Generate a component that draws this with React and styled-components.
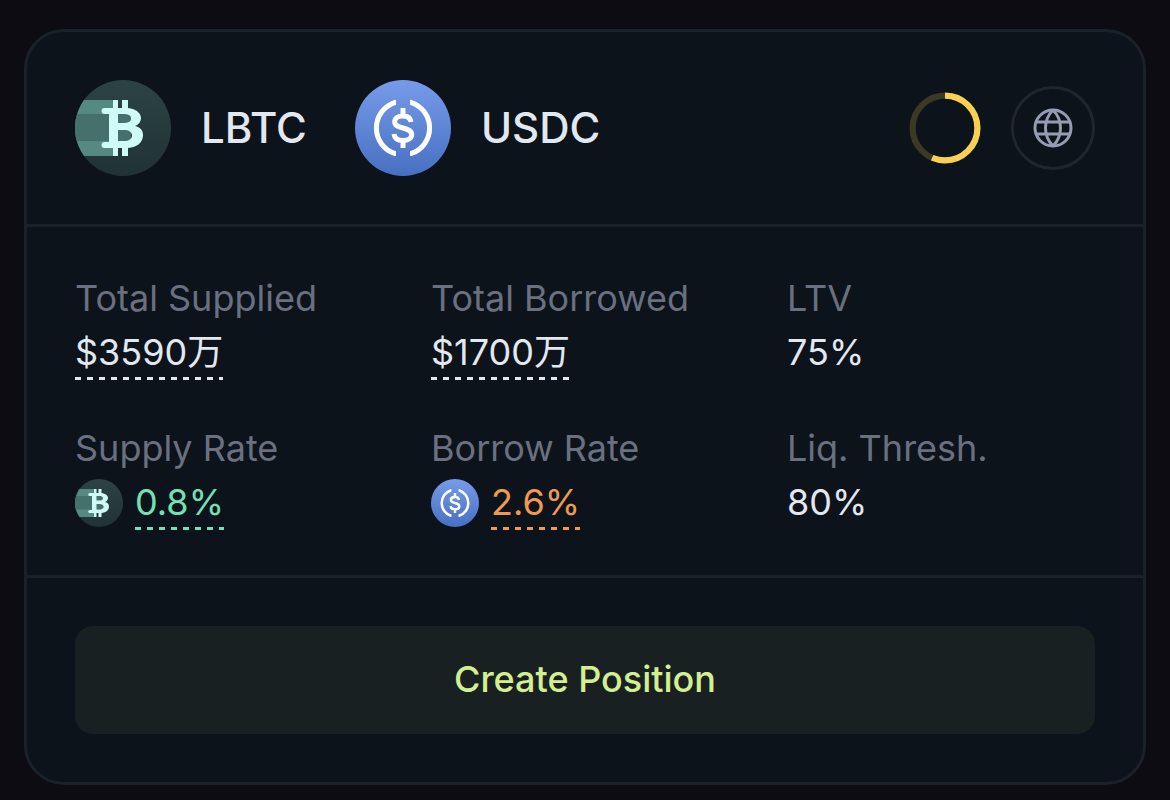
import React from "react";
import styled, { createGlobalStyle } from "styled-components";

const Global = createGlobalStyle`
  *, *::before, *::after { box-sizing: border-box; }
  body {
    margin: 0;
    background: #0c0c12;
    color: #e2e8f0;
    font-family: Inter, "Noto Sans CJK SC", sans-serif;
  }
`;

const Page = styled.main`
  padding: 29px 24px 15px;
`;

const Card = styled.article`
  background: #0c131a;
  border: 3px solid #1b2129;
  border-radius: 40px;
  overflow: hidden;
`;

const Header = styled.header`
  display: flex;
  align-items: center;
  justify-content: space-between;
  padding: 48px;
  border-bottom: 3px solid #1b2129;
`;

const Group = styled.div`
  display: flex;
  align-items: center;
  gap: ${(p) => p.$gap}px;
`;

const Symbol = styled.h2`
  margin: 0;
  font-size: 42px;
  line-height: 48px;
  font-weight: 500;
  color: #e2e8f0;
`;

const Icon = styled.svg`
  display: block;
  flex: none;
  width: ${(p) => p.$size}px;
  height: ${(p) => p.$size}px;
`;

const RoundButton = styled.button`
  display: grid;
  place-items: center;
  width: 84px;
  height: 84px;
  padding: 0;
  border: 3px solid #20252e;
  border-radius: 50%;
  background: none;
  color: #949db2;
  cursor: pointer;
`;

const Stats = styled.dl`
  display: grid;
  grid-template-columns: repeat(3, 1fr);
  gap: 45px 48px;
  margin: 0;
  padding: 48px 48px 45px;
`;

const Stat = styled.div`
  display: flex;
  flex-direction: column;
  gap: 8px;
`;

const Label = styled.dt`
  font-size: 36px;
  line-height: 46px;
  color: #6a7080;
`;

const Value = styled.dd`
  display: flex;
  align-items: flex-start;
  gap: 12px;
  margin: 0;
  font-size: 36px;
  line-height: 46px;
`;

const Figure = styled.span`
  padding-bottom: 5px;
  color: ${(p) => p.$color || "#e2e8f0"};
  background: ${(p) =>
    p.$plain
      ? "none"
      : "repeating-linear-gradient(90deg, currentColor 0 6px, transparent 6px 12px) left bottom / 100% 3px no-repeat"};
`;

const Footer = styled.footer`
  padding: 48px;
  border-top: 3px solid #1b2129;
`;

const Action = styled.button`
  display: block;
  width: 100%;
  padding: 30px 30px 32px;
  border: 0;
  border-radius: 18px;
  background: #182022;
  color: #d3ef8f;
  font: 500 36px/46px Inter, sans-serif;
  cursor: pointer;
`;

function Lbtc({ size, id }) {
  return (
    <Icon $size={size} viewBox="0 0 96 96" aria-hidden="true">
      <defs>
        <clipPath id={id}><circle cx="48" cy="48" r="48" /></clipPath>
        <linearGradient id={id + "g"} x1="0" y1="0" x2="0" y2="1">
          <stop offset="0" stopColor="#2c4344" />
          <stop offset="1" stopColor="#203234" />
        </linearGradient>
      </defs>
      <g clipPath={`url(#${id})`}>
        <rect width="96" height="96" fill={`url(#${id}g)`} />
        <path d="M0 20h40v56H0z" fill="#568981" />
        <path d="M0 34h56v27H0z" fill="#45706b" />
      </g>
      <path
        fill="#cffdf5"
        fillRule="evenodd"
        d="M38 20h5v8h4v-8h6v8c8 1 13 5 13 10 0 4-3 7-6 8 5 1 8 4 8 9 0 8-6 12-15 13v8h-6v-8h-4v8h-5v-8H29.500a2 2 0 0 1 0-6H34V34h-4.500a2 2 0 0 1 0-6H38zM43 34v9h5c5 0 8-1 8-4.500S53 34 48 34zM43 50v11h6c5 0 8-2 8-5.500S54 50 49 50z"
      />
    </Icon>
  );
}

function Usdc({ size, id }) {
  return (
    <Icon $size={size} viewBox="0 0 96 96" aria-hidden="true">
      <defs>
        <linearGradient id={id} x1="0" y1="0" x2="0" y2="1">
          <stop offset="0" stopColor="#769be9" />
          <stop offset="1" stopColor="#486fc1" />
        </linearGradient>
      </defs>
      <circle cx="48" cy="48" r="48" fill={`url(#${id})`} />
      <path
        fill="#fff"
        d="M41 21c0-1-.8-1.400-1.600-1.100A29.500 29.500 0 0 0 39.400 76.100c.8.300 1.600-.1 1.600-1.100v-3.800A24.300 24.300 0 0 1 41 24.800zM55 21c0-1 .8-1.400 1.600-1.100A29.500 29.500 0 0 1 56.600 76.100c-.8.300-1.600-.1-1.600-1.100v-3.800A24.300 24.300 0 0 0 55 24.800z"
      />
      <g fill="none" stroke="#fff" strokeWidth="5">
        <path d="M48 28v8M48 60v8" />
        <path d="M56 42c-.5-4-3.500-6-8-6-5 0-8.300 2.300-8.300 5.800 0 8.200 17 4.200 17 12.700 0 3.800-3.700 6-8.700 6s-8.500-2.200-9-6.500" />
      </g>
    </Icon>
  );
}

export default function App() {
  return (
    <Page>
      <Global />
      <Card>
        <Header>
          <Group $gap={48}>
            <Group $gap={30}>
              <Lbtc size={96} id="lbtc-large" />
              <Symbol>LBTC</Symbol>
            </Group>
            <Group $gap={30}>
              <Usdc size={96} id="usdc-large" />
              <Symbol>USDC</Symbol>
            </Group>
          </Group>
          <Group $gap={30}>
            <Icon $size={72} viewBox="0 0 72 72" role="img" aria-label="Utilization">
              <g fill="none" strokeWidth="6.200" stroke="#f8d150" transform="rotate(-90 36 36)">
                <circle cx="36" cy="36" r="32.400" opacity=".2" />
                <circle cx="36" cy="36" r="32.400" pathLength="100" strokeDasharray="56.500 43.500" />
              </g>
            </Icon>
            <RoundButton type="button" aria-label="Network">
              <Icon $size={40} viewBox="0 0 40 40" aria-hidden="true">
                <g fill="none" stroke="currentColor" strokeWidth="3">
                  <circle cx="20" cy="20" r="18" />
                  <path d="M3 14h34M3 26h34M20 2c-10 10-10 26 0 36M20 2c10 10 10 26 0 36" />
                </g>
              </Icon>
            </RoundButton>
          </Group>
        </Header>
        <Stats>
          <Stat>
            <Label>Total Supplied</Label>
            <Value><Figure>$3590万</Figure></Value>
          </Stat>
          <Stat>
            <Label>Total Borrowed</Label>
            <Value><Figure>$1700万</Figure></Value>
          </Stat>
          <Stat>
            <Label>LTV</Label>
            <Value><Figure $plain>75%</Figure></Value>
          </Stat>
          <Stat>
            <Label>Supply Rate</Label>
            <Value>
              <Lbtc size={48} id="lbtc-small" />
              <Figure $color="#74e0b3">0.8%</Figure>
            </Value>
          </Stat>
          <Stat>
            <Label>Borrow Rate</Label>
            <Value>
              <Usdc size={48} id="usdc-small" />
              <Figure $color="#f09a50">2.6%</Figure>
            </Value>
          </Stat>
          <Stat>
            <Label>Liq. Thresh.</Label>
            <Value><Figure $plain>80%</Figure></Value>
          </Stat>
        </Stats>
        <Footer>
          <Action type="button">Create Position</Action>
        </Footer>
      </Card>
    </Page>
  );
}
